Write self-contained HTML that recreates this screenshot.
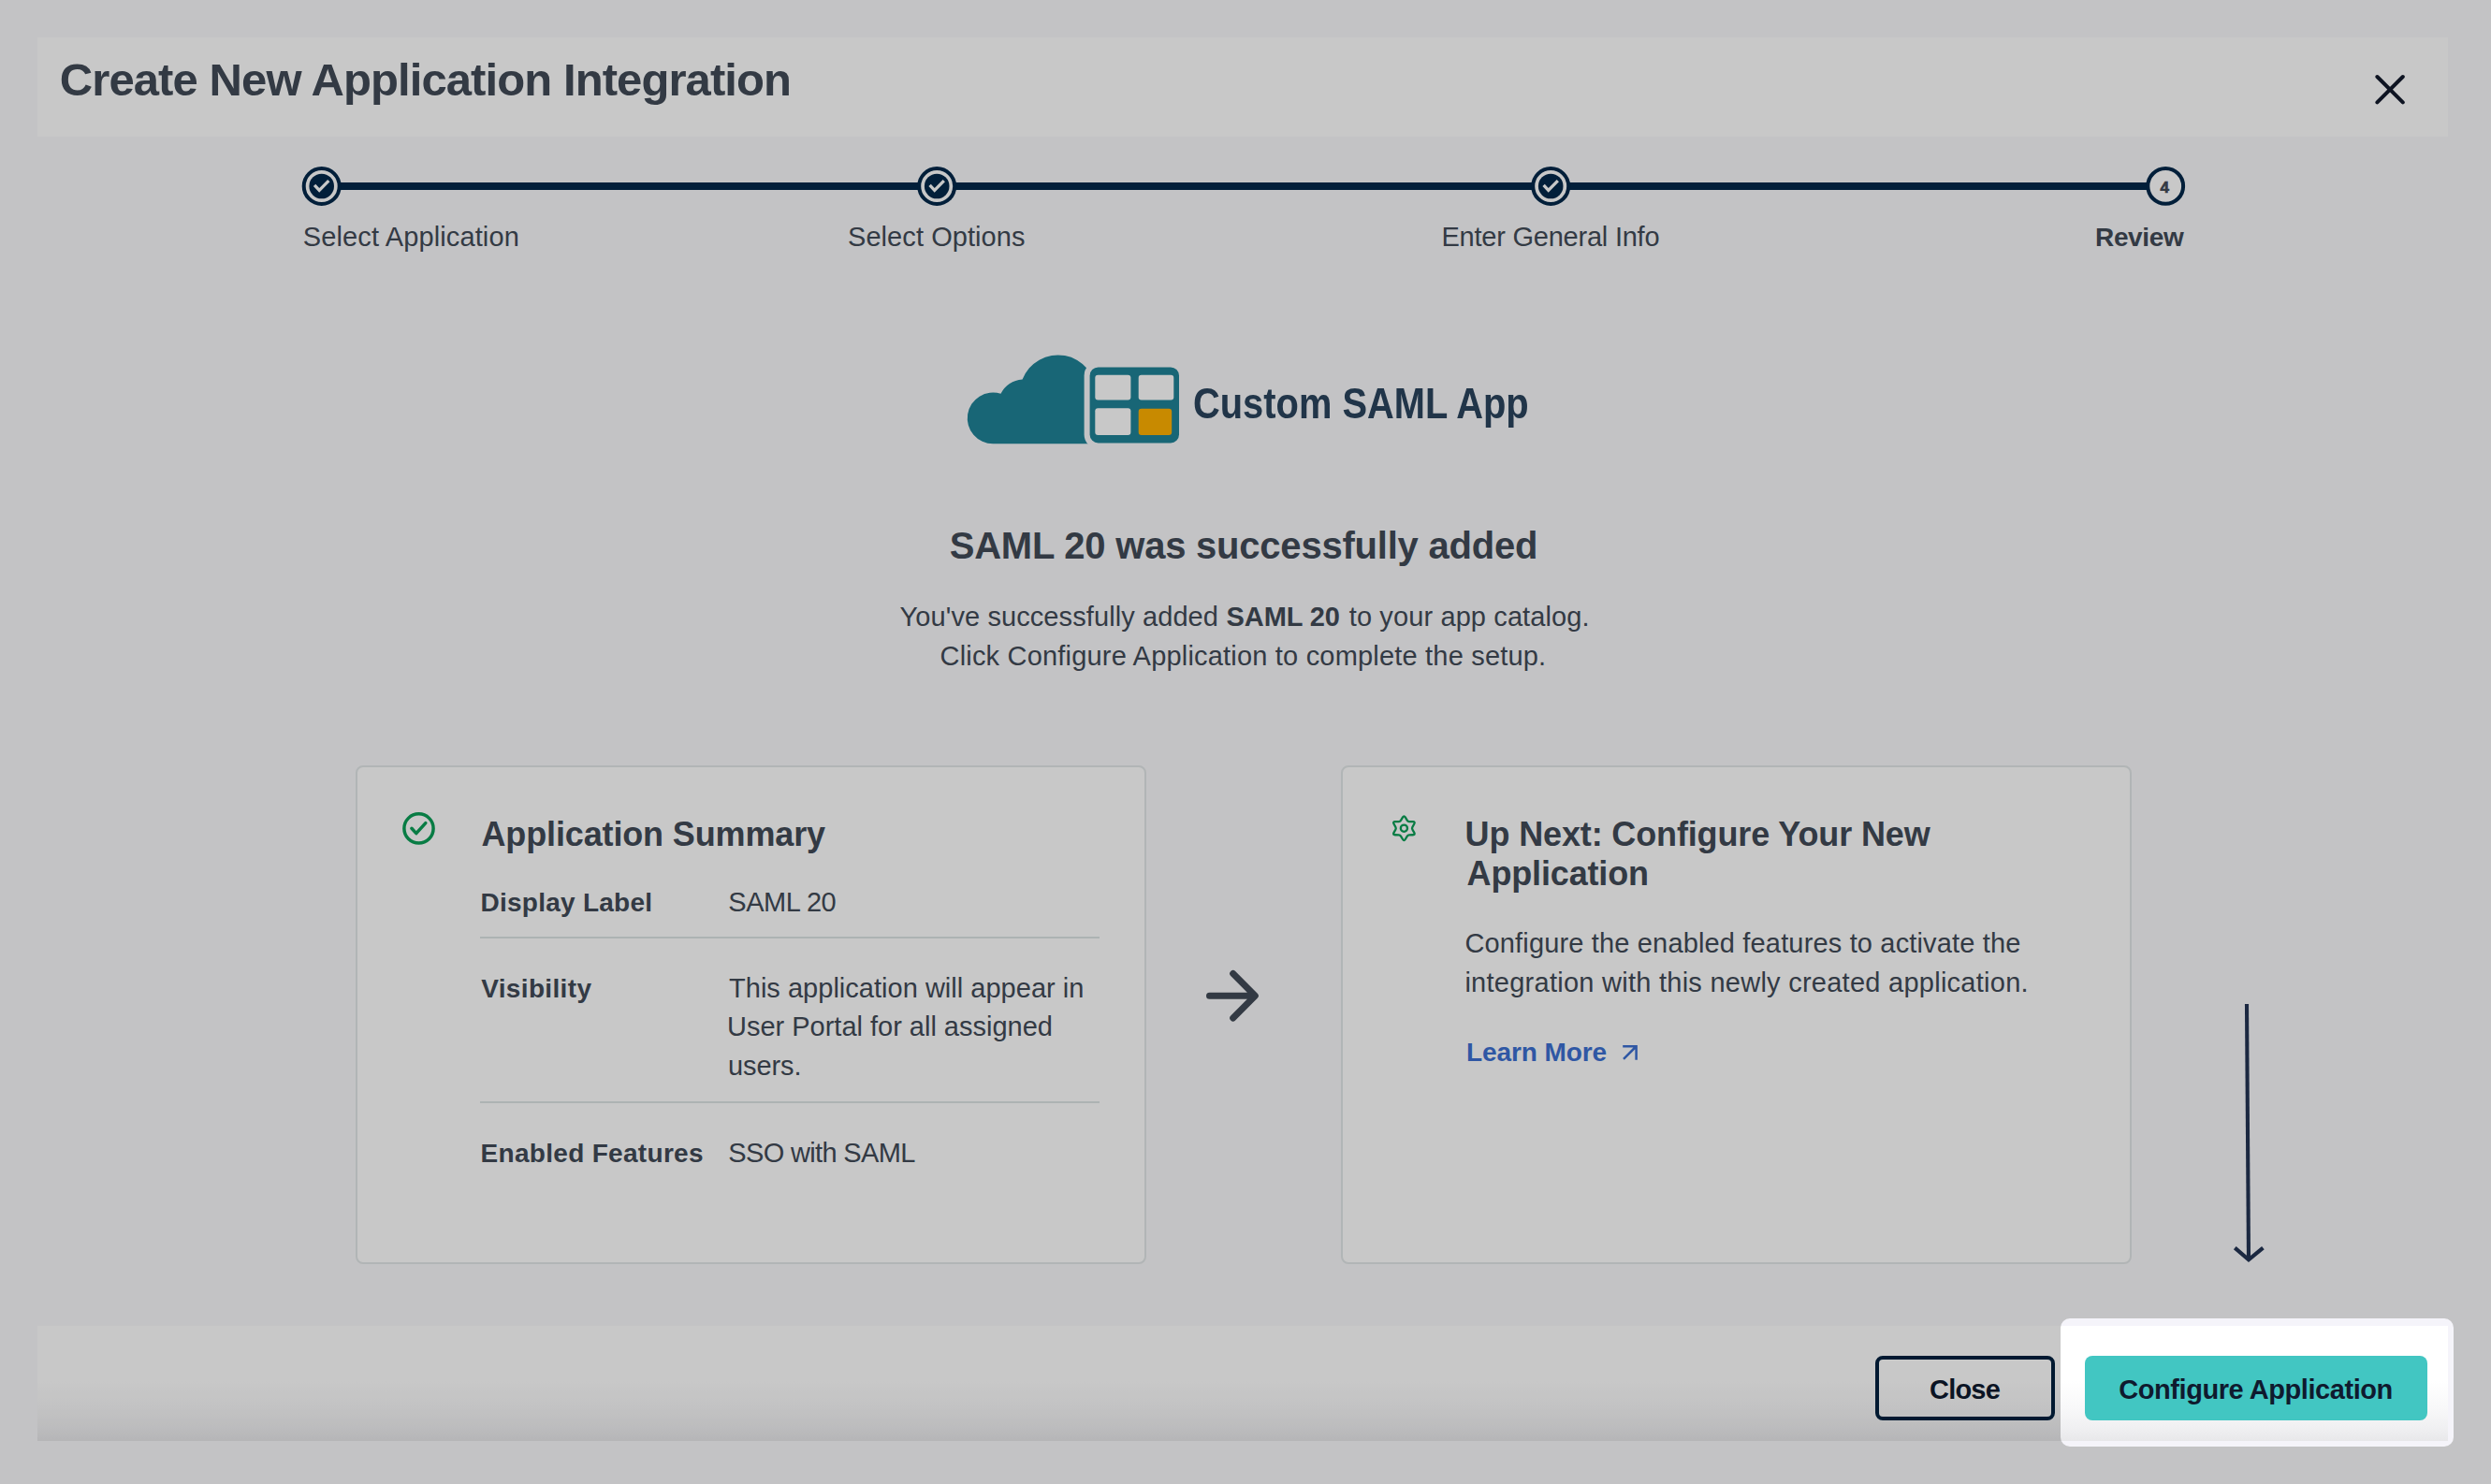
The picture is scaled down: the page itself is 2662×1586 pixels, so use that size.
<!DOCTYPE html>
<html><head><meta charset="utf-8"><title>Create New Application Integration</title>
<style>
html,body{margin:0;padding:0}
body{width:2662px;height:1586px;overflow:hidden;position:relative;background:#f9f9fb;font-family:"Liberation Sans",sans-serif}
.t{position:absolute;white-space:pre;line-height:normal}
.abs{position:absolute}
</style></head>
<body>
<div class="abs" style="left:40px;top:40px;width:2576px;height:106px;background:#fff"></div>
<div class="abs" style="left:2201.5px;top:1409px;width:420px;height:137px;border-radius:10px;background:#f5f4fa"></div>
<div class="abs" style="left:40px;top:1417px;width:2576px;height:123px;background:linear-gradient(to bottom,#ffffff 0%,#ffffff 48%,#f8f8f9 72%,#f0f0f2 88%,#e8e8ea 100%)"></div>

<div class="abs" style="left:380px;top:818px;width:841px;height:529px;border:2px solid #e2e7e8;border-radius:8px;background:#fff"></div>
<div class="abs" style="left:1433px;top:818px;width:841px;height:529px;border:2px solid #e2e7e8;border-radius:8px;background:#fff"></div>
<div class="abs" style="left:513.4px;top:1001px;width:661.3px;height:2px;background:#dde4e4"></div>
<div class="abs" style="left:513.4px;top:1176.5px;width:661.3px;height:2px;background:#dde4e4"></div>

<svg class="abs" style="left:0;top:0" width="2662" height="300" viewBox="0 0 2662 300">
<rect x="343" y="195" width="1971" height="8" fill="#03284a"/>
<circle cx="343.7" cy="199" r="19" fill="#fff" stroke="#03284a" stroke-width="4"/><circle cx="343.7" cy="199" r="13.3" fill="#03284a"/><path d="M336.1,197.9 L341.2,203.3 L351.3,193.1" fill="none" stroke="#fff" stroke-width="3.3" stroke-linecap="butt" stroke-linejoin="miter"/><circle cx="1001.2" cy="199" r="19" fill="#fff" stroke="#03284a" stroke-width="4"/><circle cx="1001.2" cy="199" r="13.3" fill="#03284a"/><path d="M993.6,197.9 L998.7,203.3 L1008.8,193.1" fill="none" stroke="#fff" stroke-width="3.3" stroke-linecap="butt" stroke-linejoin="miter"/><circle cx="1657.2" cy="199" r="19" fill="#fff" stroke="#03284a" stroke-width="4"/><circle cx="1657.2" cy="199" r="13.3" fill="#03284a"/><path d="M1649.6,197.9 L1654.7,203.3 L1664.8,193.1" fill="none" stroke="#fff" stroke-width="3.3" stroke-linecap="butt" stroke-linejoin="miter"/><circle cx="2314.2" cy="198.9" r="18.9" fill="#fff" stroke="#03284a" stroke-width="4"/></svg>
<svg class="abs" style="left:2530px;top:72px" width="50" height="50" viewBox="2530 72 50 50"><path d="M2540.4,82 L2567.8,109.4 M2567.8,82 L2540.4,109.4" stroke="#131a2c" stroke-width="4" stroke-linecap="round"/></svg>
<svg class="abs" style="left:1020px;top:370px" width="260" height="120" viewBox="1020 370 260 120">
<defs><mask id="cm"><rect x="1020" y="370" width="260" height="120" fill="#fff"/><rect x="1158.6" y="386.4" width="107.4" height="93" rx="15" fill="#000"/></mask></defs>
<path mask="url(#cm)" fill="#1f8397" d="M1061.2,474.3 A27.4,27.4 0 1 1 1069.44,420.77 A29.2,29.2 0 0 1 1092.57,405.61 A40.7,40.7 0 0 1 1171.3,420.1 L1171.3,474.3 Z"/>
<rect x="1164.6" y="392.4" width="95.4" height="81" rx="9" fill="#1f8397"/>
<rect x="1170.3" y="400.8" width="38.1" height="26.6" rx="3" fill="#fff"/>
<rect x="1216.7" y="400.8" width="37.6" height="26.6" rx="3" fill="#fff"/>
<rect x="1170.3" y="436.3" width="38.1" height="28.7" rx="3" fill="#fff"/>
<rect x="1216.7" y="436.8" width="35.5" height="28.2" rx="3" fill="#ffb000"/>
</svg>

<svg class="abs" style="left:420px;top:858px" width="56" height="56" viewBox="420 858 56 56">
<circle cx="447.5" cy="885.4" r="15.6" fill="none" stroke="#0b9f57" stroke-width="3.5"/>
<path d="M439.9,885.3 L444.8,890.6 L454.8,879.6" fill="none" stroke="#0b9f57" stroke-width="3.5" stroke-linecap="round" stroke-linejoin="round"/>
</svg>
<svg class="abs" style="left:1480px;top:864px" width="42" height="42" viewBox="1480 864 42 42">
<path id="gear" fill="none" stroke="#0b9f57" stroke-width="2.3" stroke-linejoin="round" d="M1501.75,873.42 L1503.82,876.82 Q1504.55,878.01 1505.95,878.04 L1509.93,878.14 Q1512.52,878.20 1511.28,880.48 L1509.37,883.97 Q1508.70,885.20 1509.37,886.43 L1511.28,889.92 Q1512.52,892.20 1509.93,892.26 L1505.95,892.36 Q1504.55,892.39 1503.82,893.58 L1501.75,896.98 Q1500.40,899.20 1499.05,896.98 L1496.98,893.58 Q1496.25,892.39 1494.85,892.36 L1490.87,892.26 Q1488.28,892.20 1489.52,889.92 L1491.43,886.43 Q1492.10,885.20 1491.43,883.97 L1489.52,880.48 Q1488.28,878.20 1490.87,878.14 L1494.85,878.04 Q1496.25,878.01 1496.98,876.82 L1499.05,873.42 Q1500.40,871.20 1501.75,873.42 Z"/>
<circle cx="1500.4" cy="885.2" r="3.6" fill="none" stroke="#0b9f57" stroke-width="2.3"/>
</svg>
<svg class="abs" style="left:1280px;top:1030px" width="76" height="70" viewBox="1280 1030 76 70">
<path d="M1292.5,1064.3 H1340.5 M1317.7,1040.5 L1341.3,1064.3 L1317.7,1088" fill="none" stroke="#424b57" stroke-width="7" stroke-linecap="round" stroke-linejoin="round"/>
</svg>
<svg class="abs" style="left:1725px;top:1110px" width="32" height="30" viewBox="1725 1110 32 30">
<path d="M1735,1131.8 L1748.3,1118.5 M1734.2,1118.3 H1748.6 V1132.8" fill="none" stroke="#3c70d2" stroke-width="2.5"/>
</svg>
<svg class="abs" style="left:2370px;top:1060px" width="64" height="300" viewBox="2370 1060 64 300">
<path d="M2401,1073 L2403,1346" fill="none" stroke="#233454" stroke-width="4.1"/>
<path d="M2388.3,1333.6 L2403,1346.3 L2418.4,1333.6" fill="none" stroke="#233454" stroke-width="4.2"/>
</svg>


<div class="abs" style="left:2004px;top:1449px;width:184px;height:61px;border:4px solid #02213f;border-radius:8px"></div>
<div class="abs" style="left:2228px;top:1449px;width:366px;height:69px;border-radius:8px;background:#42c6c2"></div>

<div class="t" style="left:63.8px;top:57px;font-size:49px;font-weight:bold;letter-spacing:-0.91px;color:#424b57;">Create New Application Integration</div><div class="t" style="left:323.7px;top:237px;font-size:29px;font-weight:normal;letter-spacing:0.13px;color:#424b57;">Select Application</div><div class="t" style="left:906px;top:237px;font-size:29px;font-weight:normal;letter-spacing:0.07px;color:#424b57;">Select Options</div><div class="t" style="left:1540.5px;top:237px;font-size:29px;font-weight:normal;letter-spacing:-0.23px;color:#424b57;">Enter General Info</div><div class="t" style="left:2239px;top:238px;font-size:28px;font-weight:bold;letter-spacing:-0.34px;color:#424b57;">Review</div><div class="t" style="left:1014.7px;top:561px;font-size:40px;font-weight:bold;letter-spacing:-0.22px;color:#424b57;">SAML 20 was successfully added</div><div class="t" style="left:1004.5px;top:685px;font-size:29px;font-weight:normal;letter-spacing:0.19px;color:#424b57;">Click Configure Application to complete the setup.</div><div class="t" style="left:514.5px;top:871px;font-size:36px;font-weight:bold;letter-spacing:-0.14px;color:#424b57;">Application Summary</div><div class="t" style="left:513.5px;top:949px;font-size:28px;font-weight:bold;letter-spacing:0.25px;color:#424b57;">Display Label</div><div class="t" style="left:778.3px;top:948px;font-size:29px;font-weight:normal;letter-spacing:-0.46px;color:#424b57;">SAML 20</div><div class="t" style="left:514.2px;top:1041px;font-size:28px;font-weight:bold;letter-spacing:0.35px;color:#424b57;">Visibility</div><div class="t" style="left:779px;top:1040px;font-size:29px;font-weight:normal;letter-spacing:0.02px;color:#424b57;">This application will appear in</div><div class="t" style="left:777px;top:1081px;font-size:29px;font-weight:normal;letter-spacing:-0.01px;color:#424b57;">User Portal for all assigned</div><div class="t" style="left:778px;top:1123px;font-size:29px;font-weight:normal;letter-spacing:-0.1px;color:#424b57;">users.</div><div class="t" style="left:513.5px;top:1217px;font-size:28px;font-weight:bold;letter-spacing:0.31px;color:#424b57;">Enabled Features</div><div class="t" style="left:778.3px;top:1216px;font-size:29px;font-weight:normal;letter-spacing:-0.66px;color:#424b57;">SSO with SAML</div><div class="t" style="left:1565.6px;top:871px;font-size:36px;font-weight:bold;letter-spacing:-0.14px;color:#424b57;">Up Next: Configure Your New</div><div class="t" style="left:1567.6px;top:913px;font-size:36px;font-weight:bold;letter-spacing:-0.16px;color:#424b57;">Application</div><div class="t" style="left:1565.4px;top:992px;font-size:29px;font-weight:normal;letter-spacing:0.16px;color:#424b57;">Configure the enabled features to activate the</div><div class="t" style="left:1565.4px;top:1034px;font-size:29px;font-weight:normal;letter-spacing:0.26px;color:#424b57;">integration with this newly created application.</div><div class="t" style="left:1566.9px;top:1109px;font-size:28px;font-weight:bold;letter-spacing:-0.07px;color:#3c70d2;">Learn More</div><div class="t" style="left:2062px;top:1469px;font-size:29px;font-weight:bold;letter-spacing:-0.79px;color:#0f1a2e;">Close</div><div class="t" style="left:2264.3px;top:1469px;font-size:29px;font-weight:bold;letter-spacing:-0.44px;color:#0f1a2e;">Configure Application</div><div class="t" style="left:2308.6px;top:191px;font-size:17px;font-weight:bold;letter-spacing:0px;color:#424b57;-webkit-text-stroke:0.7px #424b57;">4</div><div class="t" style="left:961.6px;top:643px;font-size:29px;font-weight:normal;letter-spacing:0.09px;color:#424b57">You've successfully added</div><div class="t" style="left:1310.6px;top:643px;font-size:29px;font-weight:bold;letter-spacing:-0.09px;color:#424b57">SAML 20</div><div class="t" style="left:1441.8px;top:643px;font-size:29px;font-weight:normal;letter-spacing:0.11px;color:#424b57">to your app catalog.</div><div class="t" style="left:1274.73px;top:404px;font-size:46px;font-weight:bold;color:#2b445d;transform:scaleX(0.8663);transform-origin:0 0">Custom SAML App</div>
<div class="abs" style="left:2201.5px;top:1409px;width:420px;height:137px;border-radius:10px;box-shadow:0 0 0 4000px rgba(0,0,0,0.216)"></div>
</body></html>
